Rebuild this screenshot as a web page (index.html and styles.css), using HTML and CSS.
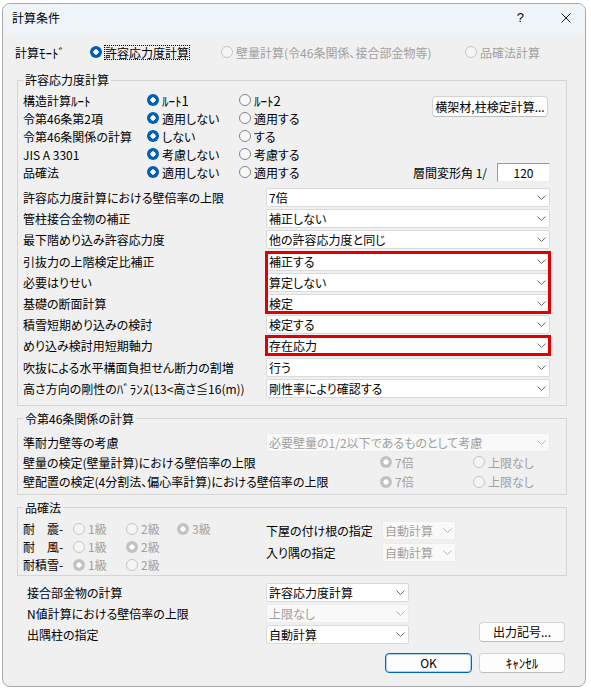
FILE: index.html
```html
<!DOCTYPE html>
<html lang="ja">
<head>
<meta charset="utf-8">
<title>計算条件</title>
<link rel="stylesheet" href="styles.css">
</head>
<body>
<div class="window">
  <div class="titlebar">
    <span class="title">計算条件</span>
    <span class="tb-help">?</span>
    <svg class="tb-close" width="10" height="10" viewBox="0 0 10 10"><path d="M0.5 0.5 L9.5 9.5 M9.5 0.5 L0.5 9.5" stroke="#1a1a1a" stroke-width="1" fill="none"/></svg>
  </div>

  <div class="mode-row">
    <span class="mode-label">計算<span class="hw">ﾓｰﾄﾞ</span></span>
    <span class="radio mode-r1"><i class="rb on"></i><span class="focus">許容応力度計算</span></span>
    <span class="radio mode-r2 dis"><i class="rb off-dis"></i>壁量計算(令46条関係、接合部金物等)</span>
    <span class="radio dis"><i class="rb off-dis"></i>品確法計算</span>
  </div>

  <fieldset class="grp g1">
    <legend>許容応力度計算</legend>
    <div class="radio-grid">
      <span class="lbl">構造計算<span class="hw">ﾙｰﾄ</span></span>
      <span class="radio"><i class="rb on"></i><span class="hw">ﾙｰﾄ1</span></span>
      <span class="radio"><i class="rb"></i><span class="hw">ﾙｰﾄ2</span></span>
      <span class="btn btn-kou">横架材,柱検定計算...</span>

      <span class="lbl">令第46条第2項</span>
      <span class="radio"><i class="rb on"></i>適用しない</span>
      <span class="radio"><i class="rb"></i>適用する</span>

      <span class="lbl">令第46条関係の計算</span>
      <span class="radio"><i class="rb on"></i>しない</span>
      <span class="radio"><i class="rb"></i>する</span>

      <span class="lbl">JIS A 3301</span>
      <span class="radio"><i class="rb on"></i>考慮しない</span>
      <span class="radio"><i class="rb"></i>考慮する</span>

      <span class="lbl r5 c1">品確法</span>
      <span class="radio r5 c2"><i class="rb on"></i>適用しない</span>
      <span class="radio r5 c3"><i class="rb"></i>適用する</span>
      <span class="drift r5"><span class="drift-label">層間変形角 1/</span><span class="edit">120</span></span>
    </div>

    <div class="sel-rows">
      <div class="labels">
        <span>許容応力度計算における壁倍率の上限</span>
        <span>管柱接合金物の補正</span>
        <span>最下階めり込み許容応力度</span>
        <span>引抜力の上階検定比補正</span>
        <span>必要はりせい</span>
        <span>基礎の断面計算</span>
        <span>積雪短期めり込みの検討</span>
        <span>めり込み検討用短期軸力</span>
        <span>吹抜による水平構面負担せん断力の割増</span>
        <span>高さ方向の剛性の<span class="hw">ﾊﾞﾗﾝｽ</span>(13&lt;高さ≦16(m))</span>
      </div>
      <div class="ctrls">
        <div class="sel"><span>7倍</span><svg width="9" height="5" viewBox="0 0 9 5"><path d="M0.5 0.5 L4.5 4.5 L8.5 0.5" stroke="#6b6b6b" fill="none"/></svg></div>
        <div class="sel"><span>補正しない</span><svg width="9" height="5" viewBox="0 0 9 5"><path d="M0.5 0.5 L4.5 4.5 L8.5 0.5" stroke="#6b6b6b" fill="none"/></svg></div>
        <div class="sel"><span>他の許容応力度と同じ</span><svg width="9" height="5" viewBox="0 0 9 5"><path d="M0.5 0.5 L4.5 4.5 L8.5 0.5" stroke="#6b6b6b" fill="none"/></svg></div>
        <div class="hl">
          <div class="sel"><span>補正する</span><svg width="9" height="5" viewBox="0 0 9 5"><path d="M0.5 0.5 L4.5 4.5 L8.5 0.5" stroke="#6b6b6b" fill="none"/></svg></div>
          <div class="sel"><span>算定しない</span><svg width="9" height="5" viewBox="0 0 9 5"><path d="M0.5 0.5 L4.5 4.5 L8.5 0.5" stroke="#6b6b6b" fill="none"/></svg></div>
          <div class="sel"><span>検定</span><svg width="9" height="5" viewBox="0 0 9 5"><path d="M0.5 0.5 L4.5 4.5 L8.5 0.5" stroke="#6b6b6b" fill="none"/></svg></div>
        </div>
        <div class="sel"><span>検定する</span><svg width="9" height="5" viewBox="0 0 9 5"><path d="M0.5 0.5 L4.5 4.5 L8.5 0.5" stroke="#6b6b6b" fill="none"/></svg></div>
        <div class="hl">
          <div class="sel"><span>存在応力</span><svg width="9" height="5" viewBox="0 0 9 5"><path d="M0.5 0.5 L4.5 4.5 L8.5 0.5" stroke="#6b6b6b" fill="none"/></svg></div>
        </div>
        <div class="sel"><span>行う</span><svg width="9" height="5" viewBox="0 0 9 5"><path d="M0.5 0.5 L4.5 4.5 L8.5 0.5" stroke="#6b6b6b" fill="none"/></svg></div>
        <div class="sel"><span>剛性率により確認する</span><svg width="9" height="5" viewBox="0 0 9 5"><path d="M0.5 0.5 L4.5 4.5 L8.5 0.5" stroke="#6b6b6b" fill="none"/></svg></div>
      </div>
    </div>
  </fieldset>

  <fieldset class="grp g2">
    <legend>令第46条関係の計算</legend>
    <div class="g2-row1">
      <span class="g2-label">準耐力壁等の考慮</span>
      <div class="sel disabled"><span>必要壁量の1/2以下であるものとして考慮</span><svg width="9" height="5" viewBox="0 0 9 5"><path d="M0.5 0.5 L4.5 4.5 L8.5 0.5" stroke="#b5b5b5" fill="none"/></svg></div>
    </div>
    <div class="g2-row">
      <span class="g2-longlabel">壁量の検定(壁量計算)における壁倍率の上限</span>
      <span class="radio dis g2-r1"><i class="rb on-dis"></i>7倍</span>
      <span class="radio dis"><i class="rb off-dis"></i>上限なし</span>
    </div>
    <div class="g2-row">
      <span class="g2-longlabel">壁配置の検定(4分割法、偏心率計算)における壁倍率の上限</span>
      <span class="radio dis g2-r1"><i class="rb on-dis"></i>7倍</span>
      <span class="radio dis"><i class="rb off-dis"></i>上限なし</span>
    </div>
  </fieldset>

  <fieldset class="grp g3">
    <legend>品確法</legend>
    <div class="g3-body">
      <div class="g3-grid">
        <span class="lbl">耐　震-</span>
        <span class="radio dis"><i class="rb off-dis"></i>1級</span>
        <span class="radio dis"><i class="rb off-dis"></i>2級</span>
        <span class="radio dis"><i class="rb on-dis"></i>3級</span>

        <span class="lbl">耐　風-</span>
        <span class="radio dis"><i class="rb off-dis"></i>1級</span>
        <span class="radio dis"><i class="rb on-dis"></i>2級</span>

        <span class="lbl">耐積雪-</span>
        <span class="radio dis"><i class="rb on-dis"></i>1級</span>
        <span class="radio dis"><i class="rb off-dis"></i>2級</span>
      </div>
      <div class="g3-right">
        <span>下屋の付け根の指定</span>
        <div class="sel disabled small"><span>自動計算</span><svg width="9" height="5" viewBox="0 0 9 5"><path d="M0.5 0.5 L4.5 4.5 L8.5 0.5" stroke="#b5b5b5" fill="none"/></svg></div>
        <span>入り隅の指定</span>
        <div class="sel disabled small"><span>自動計算</span><svg width="9" height="5" viewBox="0 0 9 5"><path d="M0.5 0.5 L4.5 4.5 L8.5 0.5" stroke="#b5b5b5" fill="none"/></svg></div>
      </div>
    </div>
  </fieldset>

  <div class="bottom">
    <span class="lbl">接合部金物の計算</span>
    <div class="sel"><span>許容応力度計算</span><svg width="9" height="5" viewBox="0 0 9 5"><path d="M0.5 0.5 L4.5 4.5 L8.5 0.5" stroke="#6b6b6b" fill="none"/></svg></div>

    <span class="lbl">N値計算における壁倍率の上限</span>
    <div class="sel disabled"><span>上限なし</span><svg width="9" height="5" viewBox="0 0 9 5"><path d="M0.5 0.5 L4.5 4.5 L8.5 0.5" stroke="#b5b5b5" fill="none"/></svg></div>

    <span class="lbl">出隅柱の指定</span>
    <div class="sel"><span>自動計算</span><svg width="9" height="5" viewBox="0 0 9 5"><path d="M0.5 0.5 L4.5 4.5 L8.5 0.5" stroke="#6b6b6b" fill="none"/></svg></div>
    <span class="btn btn-out">出力記号...</span>
  </div>

  <div class="actions">
    <span class="btn btn-ok">OK</span>
    <span class="btn btn-cancel"><span class="hw">ｷｬﾝｾﾙ</span></span>
  </div>
</div>
</body>
</html>
```

FILE: styles.css
```css
html, body {
  margin: 0;
  padding: 0;
}

body {
  background: #ffffff;
  font-family: "Noto Sans CJK JP", "Noto Sans", sans-serif;
  font-size: 12px;
  color: #000;
  font-feature-settings: "palt";
}

.hw {
  font-feature-settings: normal;
  font-size: 13px;
}

.window {
  margin: 3px 0 0 2px;
  width: 584px;
  height: 684px;
  box-sizing: border-box;
  border: 1px solid #a9a9a9;
  border-radius: 8px;
  background: #f0f0f0;
  overflow: hidden;
}

/* ---------- title bar ---------- */
.titlebar {
  height: 31px;
  background: #eef4f8;
  display: flex;
  align-items: center;
  padding: 0 14px 3px 9px;
  box-sizing: border-box;
}
.title {
  flex: 1;
  line-height: 16px;
}
.tb-help {
  font-family: "Liberation Sans", sans-serif;
  font-size: 13px;
  line-height: 16px;
  margin-right: 37px;
}
.tb-close {
  display: block;
}

/* ---------- radios ---------- */
.radio {
  display: flex;
  align-items: center;
  white-space: nowrap;
}
.rb {
  display: inline-block;
  flex: none;
  width: 12px;
  height: 12px;
  box-sizing: border-box;
  border-radius: 50%;
  border: 1px solid #858585;
  background: #f7f7f7;
  margin-right: 3px;
}
.rb.on {
  border: none;
  background: radial-gradient(circle at center, #ffffff 0 2.4px, #005fb8 2.9px);
}
.rb.off-dis {
  border-color: #c6c6c6;
  background: #f5f5f5;
}
.rb.on-dis {
  border: none;
  background: radial-gradient(circle at center, #ffffff 0 2.4px, #c2c2c2 2.9px);
}
.dis {
  color: #a0a0a0;
}

/* ---------- mode row ---------- */
.mode-row {
  display: flex;
  align-items: center;
  height: 18px;
  margin: 8px 0 0 12px;
}
.mode-label {
  width: 75px;
}
.mode-r1 {
  width: 131px;
}
.mode-r2 {
  width: 244px;
}
.focus {
  line-height: 13px;
  outline: 1px dotted #000;
  outline-offset: 0;
}

/* ---------- group boxes ---------- */
.grp {
  margin: 0 0 0 14px;
  width: 550px;
  box-sizing: border-box;
  border: 1px solid #d5d5d5;
  min-width: 0;
  padding: 0 16px 0 5px;
}
.grp legend {
  padding: 0 2px;
  line-height: 16px;
}
.g1 {
  margin-top: 11px;
  padding-top: 3px;
  padding-bottom: 7px;
}
.g2 {
  margin-top: 5px;
  padding-top: 6px;
  padding-bottom: 3px;
}
.g3 {
  margin-top: 5px;
  padding-top: 4px;
  padding-bottom: 1px;
}

/* group 1 radio grid */
.radio-grid {
  display: grid;
  grid-template-columns: 124px 92px 1fr 118px;
  grid-auto-rows: 18px;
  align-items: center;
  white-space: nowrap;
}
.radio-grid .lbl,
.g3-grid .lbl,
.bottom .lbl {
  grid-column: 1;
}
.radio-grid .btn-kou {
  grid-column: 4;
  grid-row: 1 / span 2;
  align-self: start;
  margin-top: 5px;
  width: 116px;
  height: 21px;
}
.radio-grid .r5 {
  grid-row: 5;
}
.radio-grid .c1 {
  grid-column: 1;
}
.radio-grid .c2 {
  grid-column: 2;
}
.radio-grid .c3 {
  grid-column: 3;
}
.radio-grid .drift {
  grid-column: 3 / span 2;
  display: flex;
  justify-content: flex-end;
  align-items: center;
}
.drift-label {
  margin-right: 10px;
}
.edit {
  width: 53px;
  height: 19px;
  box-sizing: border-box;
  margin-top: 1px;
  background: #fff;
  border-top: 1px solid #9a9a9a;
  border-left: 1px solid #9a9a9a;
  border-right: 1px solid #ededed;
  border-bottom: 1px solid #ededed;
  text-align: center;
  line-height: 17px;
}

/* group 1 select rows */
.sel-rows {
  display: flex;
  margin-top: 7px;
}
.labels {
  width: 243px;
  display: flex;
  flex-direction: column;
  gap: 2.2px;
  white-space: nowrap;
}
.labels > span {
  line-height: 19px;
  height: 19px;
}
.ctrls {
  width: 284px;
  display: flex;
  flex-direction: column;
  gap: 2.2px;
}
.hl {
  display: flex;
  flex-direction: column;
  gap: 2.2px;
  outline: 3px solid #e00000;
  outline-offset: -2px;
  position: relative;
  z-index: 1;
}

/* combo box */
.sel {
  height: 19px;
  box-sizing: border-box;
  background: #fff;
  border: 1px solid #dadada;
  border-radius: 2px;
  display: flex;
  align-items: center;
  padding: 0 3px 0 2px;
  line-height: 17px;
  white-space: nowrap;
  overflow: hidden;
}
.sel span {
  flex: 1;
}
.sel svg {
  flex: none;
  display: block;
}
.hl .sel {
  position: relative;
  z-index: -1;
}
.sel.disabled {
  background: #f9f9f9;
  border-color: #ececec;
  color: #a0a0a0;
}
.sel.small {
  width: 74px;
}

/* group 2 */
.g2-row1 {
  display: flex;
  align-items: center;
  height: 19px;
}
.g2-label {
  width: 243px;
  flex: none;
}
.g2-row1 .sel {
  flex: 1;
}
.g2-row {
  display: flex;
  align-items: center;
  height: 18px;
  margin-top: 1.5px;
  white-space: nowrap;
}
.g2-longlabel {
  width: 357px;
  flex: none;
}
.g2-r1 {
  width: 93px;
}

/* group 3 */
.g3-body {
  display: flex;
}
.g3-grid {
  width: 243px;
  flex: none;
  display: grid;
  grid-template-columns: 50px 53px 51px 1fr;
  grid-auto-rows: 18px;
  align-items: center;
  white-space: nowrap;
}
.g3-right {
  margin-top: 1px;
  display: grid;
  grid-template-columns: 116px 74px;
  grid-auto-rows: 19px;
  row-gap: 3px;
  align-items: center;
  align-self: start;
  white-space: nowrap;
}

/* bottom area */
.bottom {
  margin: 7px 20px 0 24px;
  display: grid;
  grid-template-columns: 239px 143px 1fr 86px;
  grid-auto-rows: 19px;
  row-gap: 2px;
  align-items: center;
  white-space: nowrap;
}
.btn-out {
  grid-column: 4;
  grid-row: 3;
  margin-top: -3px;
  align-self: start;
}

/* buttons */
.btn {
  height: 20px;
  box-sizing: border-box;
  border: 1px solid #d3d3d3;
  border-bottom-color: #bdbdbd;
  border-radius: 4px;
  background: #fdfdfd;
  display: flex;
  align-items: center;
  justify-content: center;
  white-space: nowrap;
  line-height: 16px;
}
.actions {
  display: flex;
  justify-content: flex-end;
  gap: 7px;
  margin: 9px 20px 0 0;
}
.btn-ok {
  width: 87px;
  border: 1px solid #0067c0;
  box-shadow: inset 0 0 0 1px rgba(0, 103, 192, 0.3);
}
.btn-cancel {
  width: 86px;
}
```
